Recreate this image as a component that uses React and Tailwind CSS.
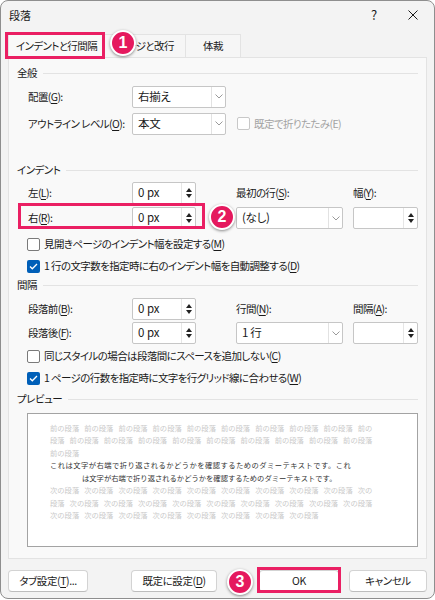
import React from "react";

const font = {
  fontFamily: '"Noto Sans CJK JP", "Noto Sans", sans-serif',
};

function U({ children }) {
  return <span className="underline underline-offset-2">{children}</span>;
}

function Spinner({ value, w = "w-[64px]" }) {
  return (
    <div className={`${w} h-[22px] flex bg-white border border-[#c6c6c6] rounded-[2px]`}>
      <div className="flex-1 pl-[5px] flex items-center text-[11.5px] text-[#1a1a1a]">{value}</div>
      <div className="w-[14px] flex flex-col border-l border-[#e6e6e6]">
        <div className="flex-1 flex items-end justify-center pb-[1px]">
          <svg width="6" height="4" viewBox="0 0 6 4">
            <path d="M0 4 L3 0 L6 4 Z" fill="#222" />
          </svg>
        </div>
        <div className="flex-1 flex items-start justify-center pt-[1px]">
          <svg width="6" height="4" viewBox="0 0 6 4">
            <path d="M0 0 L3 4 L6 0 Z" fill="#222" />
          </svg>
        </div>
      </div>
    </div>
  );
}

function Select({ value, w }) {
  return (
    <div className={`${w} h-[22px] flex bg-white border border-[#c6c6c6] rounded-[2px]`}>
      <div className="flex-1 pl-[5px] flex items-center text-[11.5px] tracking-[-0.3px] text-[#1a1a1a] whitespace-nowrap">{value}</div>
      <div className="w-[14px] flex items-center justify-center border-l border-[#e2e2e2]">
        <svg width="8" height="5" viewBox="0 0 8 5">
          <path d="M0.5 0.5 L4 4 L7.5 0.5" fill="none" stroke="#9a9a9a" strokeWidth="1" />
        </svg>
      </div>
    </div>
  );
}

function Check({ checked, disabled }) {
  if (checked) {
    return (
      <div className="w-[13px] h-[13px] shrink-0 rounded-[2px] bg-[#005fb8] flex items-center justify-center">
        <svg width="9" height="7" viewBox="0 0 9 7">
          <path d="M1 3.5 L3.3 5.8 L8 1" fill="none" stroke="#fff" strokeWidth="1.3" />
        </svg>
      </div>
    );
  }
  return (
    <div
      className={`w-[13px] h-[13px] shrink-0 rounded-[2px] border bg-white ${
        disabled ? "border-[#c8c8c8]" : "border-[#7a7a7a]"
      }`}
    />
  );
}

function CheckRow({ checked, children }) {
  return (
    <div className="h-[22px] ml-[10px] flex items-center gap-[4px] text-[10.5px] tracking-[-0.6px] text-[#1a1a1a] whitespace-nowrap">
      <Check checked={checked} />
      <span>{children}</span>
    </div>
  );
}

function Section({ title, className = "" }) {
  return (
    <div className={`h-[16px] flex items-center gap-[6px] text-[10.5px] tracking-[-0.5px] text-[#1a1a1a] whitespace-nowrap ${className}`}>
      <span>{title}</span>
      <div className="flex-1 h-px bg-[#e3e3e3]" />
    </div>
  );
}

function Label({ children, w = "w-[104px]" }) {
  return (
    <div className={`${w} shrink-0 text-[10.5px] tracking-[-0.6px] text-[#1a1a1a] whitespace-nowrap`}>
      {children}
    </div>
  );
}

function Button({ children, w }) {
  return (
    <div
      className={`${w} h-[22px] flex items-center justify-center bg-white border border-[#d3d3d3] border-b-[#bdbdbd] rounded-[4px] text-[10.5px] tracking-[-0.4px] text-[#1a1a1a] whitespace-nowrap`}
    >
      {children}
    </div>
  );
}

function Badge({ n, className }) {
  return (
    <div
      className={`absolute w-[26px] h-[26px] rounded-full bg-[#e5195e] border-2 border-white shadow-[0_1px_3px_rgba(0,0,0,0.45)] flex items-center justify-center text-white text-[16px] font-bold ${className}`}
      style={{ fontFamily: '"Liberation Sans", Arial, sans-serif' }}
    >
      {n}
    </div>
  );
}

function PLine({ units, dark, className = "" }) {
  return (
    <div
      className={`h-[12.5px] flex items-center gap-[5px] whitespace-nowrap text-[7.3px] [font-feature-settings:normal] ${
        dark ? "text-[#333]" : "text-[#c9c9c9]"
      } ${className}`}
    >
      {units.map((u, i) => (
        <span key={i}>{u}</span>
      ))}
    </div>
  );
}

const rep = (s, n) => Array.from({ length: n }, () => s);

export default function App() {
  return (
    <div className="relative w-[435px] h-[600px] bg-white [font-feature-settings:'palt']" style={font}>
      <div className="w-[435px] h-[599px] flex flex-col bg-[#f3f3f3] border border-[#8e8e8e] rounded-[8px] overflow-hidden">
        {/* title bar */}
        <div className="h-[28px] flex items-center pl-[8px] text-[11px] text-[#1a1a1a]">
          <span className="flex-1">段落</span>
          <span className="w-[12px] text-center text-[13px] mr-[28px]">?</span>
          <svg width="10" height="10" viewBox="0 0 10 10" className="mr-[16px]">
            <path d="M0.5 0.5 L9.5 9.5 M9.5 0.5 L0.5 9.5" stroke="#1a1a1a" strokeWidth="1" />
          </svg>
        </div>

        {/* tabs */}
        <div className="mt-[4px] h-[24px] pl-[7px] flex items-end text-[10.5px] tracking-[-0.6px] text-[#1a1a1a] whitespace-nowrap">
          <div className="w-[97px] h-[24px] flex items-center justify-center bg-[#f9f9f9] border border-b-0 border-[#e3e3e3]">
            インデントと行間隔
          </div>
          <div className="w-[81px] h-[23px] flex items-center justify-center bg-[#f6f6f6] border border-l-0 border-b-0 border-[#e3e3e3]">
            ページと改行
          </div>
          <div className="w-[55px] h-[23px] flex items-center justify-center bg-[#f6f6f6] border border-l-0 border-b-0 border-[#e3e3e3]">
            体裁
          </div>
        </div>

        {/* panel */}
        <div className="ml-[7px] w-[419px] h-[502px] flex flex-col px-[8px] pt-[7px] bg-[#f9f9f9] border border-[#e3e3e3]">
          <Section title="全般" />
          <div className="mt-[5px] ml-[11px] h-[21px] flex items-center">
            <Label>
              配置(<U>G</U>):
            </Label>
            <Select value="右揃え" w="w-[94px]" />
          </div>
          <div className="mt-[6px] ml-[11px] h-[21px] flex items-center">
            <Label>
              アウトライン レベル(<U>O</U>):
            </Label>
            <Select value="本文" w="w-[94px]" />
            <div className="ml-[11px] flex items-center gap-[4px] text-[10.5px] tracking-[-0.6px] text-[#a3a3a3] whitespace-nowrap">
              <Check disabled />
              <span>既定で折りたたみ(E)</span>
            </div>
          </div>

          <Section title="インデント" className="mt-[28px]" />
          <div className="mt-[4px] ml-[11px] h-[22px] flex items-center">
            <Label>
              左(<U>L</U>):
            </Label>
            <Spinner value="0 px" />
            <Label w="w-[117px] ml-[40px]">
              最初の行(<U>S</U>):
            </Label>
            <Label w="w-auto">
              幅(<U>Y</U>):
            </Label>
          </div>
          <div className="mt-[3px] ml-[11px] h-[22px] flex items-center">
            <Label>
              右(<U>R</U>):
            </Label>
            <Spinner value="0 px" />
            <div className="ml-[40px]">
              <Select value="(なし)" w="w-[107px]" />
            </div>
            <div className="ml-[10px]">
              <Spinner value="" w="w-[65px]" />
            </div>
          </div>
          <div className="mt-[4px]">
            <CheckRow>
              見開きページのインデント幅を設定する(<U>M</U>)
            </CheckRow>
          </div>
          <CheckRow checked>
            1 行の文字数を指定時に右のインデント幅を自動調整する(<U>D</U>)
          </CheckRow>

          <Section title="間隔" />
          <div className="mt-[5px] ml-[11px] h-[22px] flex items-center">
            <Label>
              段落前(<U>B</U>):
            </Label>
            <Spinner value="0 px" />
            <Label w="w-[117px] ml-[40px]">
              行間(<U>N</U>):
            </Label>
            <Label w="w-auto">
              間隔(<U>A</U>):
            </Label>
          </div>
          <div className="mt-[2px] ml-[11px] h-[22px] flex items-center">
            <Label>
              段落後(<U>F</U>):
            </Label>
            <Spinner value="0 px" />
            <div className="ml-[40px]">
              <Select value="1 行" w="w-[107px]" />
            </div>
            <div className="ml-[10px]">
              <Spinner value="" w="w-[65px]" />
            </div>
          </div>
          <div className="mt-[1px]">
            <CheckRow>
              同じスタイルの場合は段落間にスペースを追加しない(<U>C</U>)
            </CheckRow>
          </div>
          <CheckRow checked>
            1 ページの行数を指定時に文字を行グリッド線に合わせる(<U>W</U>)
          </CheckRow>

          <Section title="プレビュー" className="mt-[2px]" />
          <div className="mt-[6px] ml-[10px] h-[134px] flex flex-col pt-[8px] pl-[22px] bg-white border border-[#a3a3a3]">
            <PLine units={[...rep("前の段落", 9), "前の"]} />
            <PLine units={["段落", ...rep("前の段落", 9)]} />
            <PLine units={["前の段落"]} />
            <PLine dark className="tracking-[0.45px]" units={["これは文字が右端で折り返されるかどうかを確認するためのダミーテキストです。これ"]} />
            <PLine dark className="pl-[32px]" units={["は文字が右端で折り返されるかどうかを確認するためのダミーテキストです。"]} />
            <PLine units={[...rep("次の段落", 9), "次の"]} />
            <PLine units={["段落", ...rep("次の段落", 9)]} />
            <PLine units={rep("次の段落", 8)} />
          </div>
        </div>

        {/* buttons */}
        <div className="mt-[11px] h-[22px] pl-[7px] flex items-center">
          <Button w="w-[80px]">
            タブ設定(<U>T</U>)...
          </Button>
          <div className="ml-[43px]">
            <Button w="w-[86px]">
              既定に設定(<U>D</U>)
            </Button>
          </div>
          <div className="ml-[42px]">
            <Button w="w-[80px]">OK</Button>
          </div>
          <div className="ml-[10px]">
            <Button w="w-[78px]">キャンセル</Button>
          </div>
        </div>
      </div>

      {/* annotations */}
      <div className="absolute left-[5px] top-[32px] w-[100px] h-[27px] border-[3px] border-[#ea1f63]" />
      <div className="absolute left-[18px] top-[203px] w-[187px] h-[26px] border-[3px] border-[#ea1f63]" />
      <div className="absolute left-[257px] top-[567px] w-[84px] h-[26px] border-[3px] border-[#ea1f63]" />
      <Badge n="1" className="left-[110px] top-[30px]" />
      <Badge n="2" className="left-[209px] top-[204px]" />
      <Badge n="3" className="left-[227px] top-[569px]" />
    </div>
  );
}
